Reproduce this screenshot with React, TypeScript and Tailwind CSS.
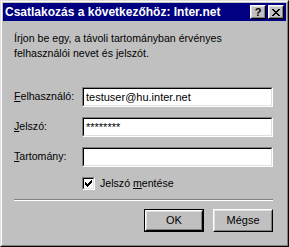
import React from "react";

const raised =
  "border border-t-white border-l-white border-r-black border-b-black";

function TitleBtn({ children }: { children: React.ReactNode }) {
  return (
    <div className={`w-[16px] h-[14px] bg-[#c0c0c0] ${raised} flex`}>
      <div className="flex-1 border border-t-[#dfdfdf] border-l-[#dfdfdf] border-r-[#808080] border-b-[#808080] flex items-center justify-center text-black">
        {children}
      </div>
    </div>
  );
}

function Field({ value }: { value?: string }) {
  return (
    <div className="h-[20px] w-[191px] border border-t-[#808080] border-l-[#808080] border-r-white border-b-white flex">
      <div className="flex-1 border border-t-black border-l-black border-r-[#dfdfdf] border-b-[#dfdfdf] bg-white flex items-center pl-[2px] overflow-hidden">
        <span className="text-[11px] leading-none">{value}</span>
      </div>
    </div>
  );
}

function Button({ label, def }: { label: string; def?: boolean }) {
  const inner = (
    <div className={`flex-1 flex ${raised}`}>
      <div className="flex-1 border border-t-[#dfdfdf] border-l-[#dfdfdf] border-r-[#808080] border-b-[#808080] flex items-center justify-center text-[11px]">
        {label}
      </div>
    </div>
  );
  return def ? (
    <div className="w-[60px] h-[23px] border border-black flex">{inner}</div>
  ) : (
    <div className="w-[60px] h-[23px] flex">{inner}</div>
  );
}

export default function App() {
  return (
    <div className="w-[289px] h-[247px] bg-[#c0c0c0] border border-t-[#dfdfdf] border-l-[#dfdfdf] border-r-black border-b-black font-['Liberation_Sans',Arial,sans-serif] text-black">
      <div className="h-full border border-t-white border-l-white border-r-[#808080] border-b-[#808080] p-px flex flex-col">
        <div className="h-[18px] bg-[#000080] flex items-center pl-[2px] pr-[2px]">
          <span className="flex-1 text-white font-bold text-[12px] leading-none">
            Csatlakozás a következőhöz: Inter.net
          </span>
          <div className="flex gap-[2px]">
            <TitleBtn>
              <span className="font-bold text-[11px] leading-none">?</span>
            </TitleBtn>
            <TitleBtn>
              <svg width="8" height="7" viewBox="0 0 8 7">
                <path d="M0 0h2v1h1v1h2V1h1V0h2v1H7v1H6v1H5v1h1v1h1v1h1v1H6V6H5V5H3v1H2v1H0V6h1V5h1V4h1V3H2V2H1V1H0z" fill="black" />
              </svg>
            </TitleBtn>
          </div>
        </div>
        <div className="px-[11px] flex flex-col">
          <p className="mt-[10px] text-[10.6px] leading-[15px]">
            Írjon be egy, a távoli tartományban érvényes
            <br />
            felhasználói nevet és jelszót.
          </p>
          <div className="mt-[26px] grid grid-cols-[68px_1fr] gap-y-[10px] items-center text-[10.6px]">
            <span>
              <u>F</u>elhasználó:
            </span>
            <Field value="testuser@hu.inter.net" />
            <span>
              <u>J</u>elszó:
            </span>
            <Field value="********" />
            <span>
              <u>T</u>artomány:
            </span>
            <Field />
          </div>
          <div className="mt-[9px] ml-[68px] flex items-center gap-[5px] text-[10.6px]">
            <div className="w-[13px] h-[13px] border border-t-[#808080] border-l-[#808080] border-r-white border-b-white flex">
              <div className="flex-1 border border-t-black border-l-black border-r-[#dfdfdf] border-b-[#dfdfdf] bg-white flex items-center justify-center">
                <svg width="7" height="7" viewBox="0 0 7 7">
                  <path d="M6 0h1v3H6v1H5v1H4v1H3v1H2V6H1V5H0V2h1v1h1v1h1V3h1V2h1V1h1z" fill="black" />
                </svg>
              </div>
            </div>
            <span>
              Jelszó <u>m</u>entése
            </span>
          </div>
          <div className="mt-[7px] h-[2px] border-t border-t-[#808080] border-b border-b-white w-[259px]" />
          <div className="mt-[8px] flex justify-end gap-[9px] w-[259px]">
            <Button label="OK" def />
            <Button label="Mégse" />
          </div>
        </div>
      </div>
    </div>
  );
}
